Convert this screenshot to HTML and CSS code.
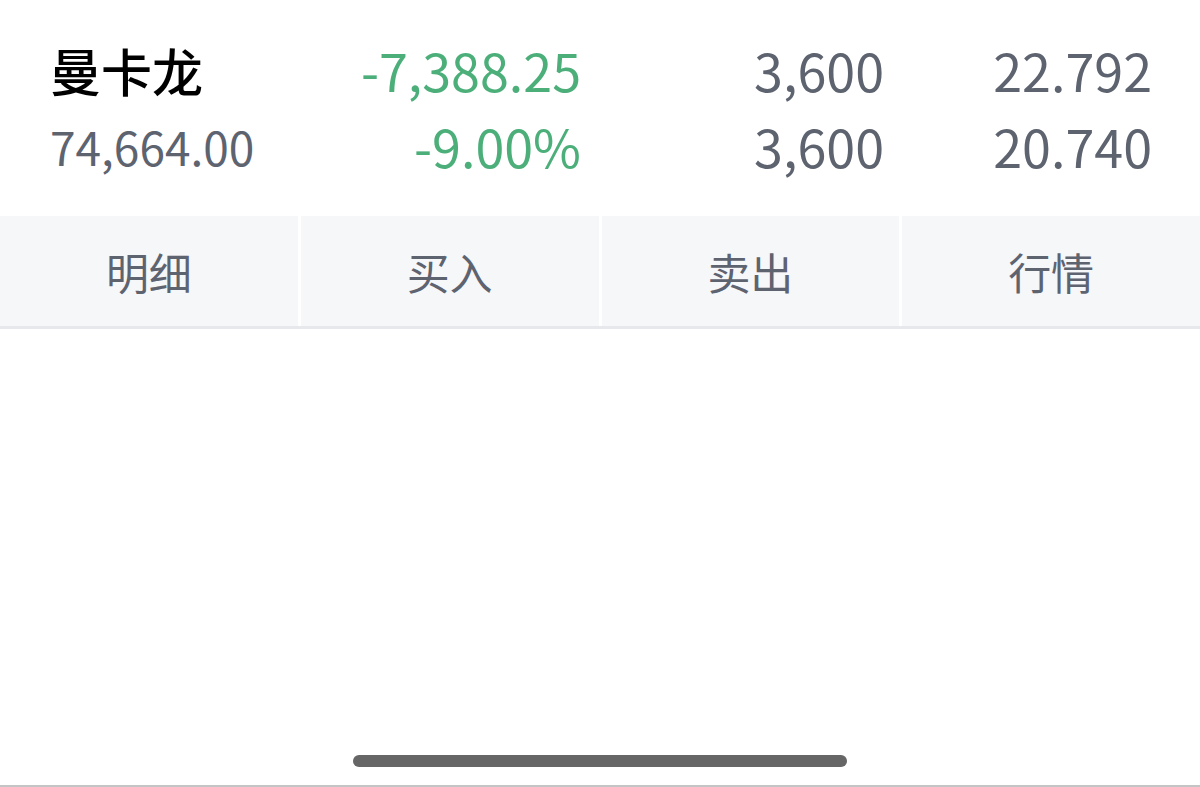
FILE: index.html
```html
<!DOCTYPE html>
<html lang="zh-CN">
<head>
    <meta charset="UTF-8">
    <meta name="viewport" content="width=device-width, initial-scale=1.0">
    <title>持仓</title>
    <link rel="stylesheet" href="styles.css">
</head>
<body>
    <div class="position">
        <div class="cell name">曼卡龙</div>
        <div class="cell num green">-7,388.25</div>
        <div class="cell num">3,600</div>
        <div class="cell num">22.792</div>

        <div class="cell price">74,664.00</div>
        <div class="cell num green">-9.00%</div>
        <div class="cell num">3,600</div>
        <div class="cell num">20.740</div>
    </div>

    <div class="actions">
        <div class="action">明细</div>
        <div class="action">买入</div>
        <div class="action">卖出</div>
        <div class="action">行情</div>
    </div>

    <div class="spacer"></div>

    <div class="home-bar">
        <div class="indicator"></div>
    </div>
</body>
</html>
```

FILE: styles.css
```css
body {
    margin: 0;
    height: 787px;
    display: flex;
    flex-direction: column;
    font-family: "Noto Sans CJK SC", "Noto Sans", sans-serif;
    background: #fff;
    color: #5e6370;
}
.position {
    display: grid;
    grid-template-columns: 250px 281px 303px 268px;
    padding: 32px 48px 0 50px;
    font-size: 52px;
    line-height: 76px;
}
.cell {
    white-space: nowrap;
}
.name {
    color: #000;
    font-weight: 500;
    font-size: 51px;
}
.price {
    font-size: 46px;
}
.num {
    text-align: right;
}
.green {
    color: #4caf7a;
}
.actions {
    margin-top: 32px;
    display: flex;
    gap: 3px;
    background: #fff;
    border-bottom: 3px solid #e6e8eb;
}
.action {
    flex: 1;
    height: 110px;
    line-height: 110px;
    text-align: center;
    background: #f6f7f9;
    font-size: 43px;
    color: #5e6370;
}
.spacer {
    flex: 1;
}
.home-bar {
    height: 40px;
    border-bottom: 2px solid #c4c4c4;
    display: flex;
    justify-content: center;
}
.indicator {
    width: 494px;
    height: 12px;
    margin-top: 10px;
    border-radius: 6px;
    background: #666;
}
```
